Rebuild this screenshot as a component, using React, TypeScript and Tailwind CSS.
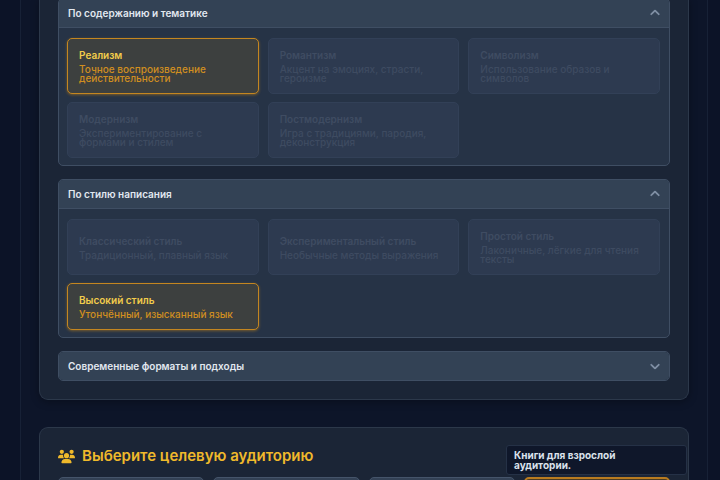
import { useState } from "react";
import { FaChevronDown, FaChevronUp, FaUsers } from "react-icons/fa6";

type Option = { title: string; text: string; state: "selected" | "disabled" };
type Group = { title: string; open: boolean; options: Option[] };

const groups: Group[] = [
  {
    title: "По содержанию и тематике",
    open: true,
    options: [
      { title: "Реализм", text: "Точное воспроизведение действительности", state: "selected" },
      { title: "Романтизм", text: "Акцент на эмоциях, страсти, героизме", state: "disabled" },
      { title: "Символизм", text: "Использование образов и символов", state: "disabled" },
      { title: "Модернизм", text: "Экспериментирование с формами и стилем", state: "disabled" },
      { title: "Постмодернизм", text: "Игра с традициями, пародия, деконструкция", state: "disabled" },
    ],
  },
  {
    title: "По стилю написания",
    open: true,
    options: [
      { title: "Классический стиль", text: "Традиционный, плавный язык", state: "disabled" },
      { title: "Экспериментальный стиль", text: "Необычные методы выражения", state: "disabled" },
      { title: "Простой стиль", text: "Лаконичные, лёгкие для чтения тексты", state: "disabled" },
      { title: "Высокий стиль", text: "Утончённый, изысканный язык", state: "selected" },
    ],
  },
  { title: "Современные форматы и подходы", open: false, options: [] },
];

const audiences = ["Дети", "Подростки", "Молодёжь", "Взрослые"];

function OptionCard({ option }: { option: Option }) {
  const selected = option.state === "selected";
  return (
    <button
      type="button"
      disabled={!selected}
      aria-pressed={selected}
      className={`flex flex-col justify-center rounded-[5px] border px-[11px] py-[10px] text-left ${
        selected
          ? "border-[#c48620] bg-[#3d403f] shadow-[0_1px_3px_rgba(245,158,11,0.4)]"
          : "border-[#324057] bg-[#2d3a50]"
      }`}
    >
      <span className={`text-[10px] leading-3 font-semibold ${selected ? "text-[#f2cc4b]" : "text-[#3f4c62]"}`}>
        {option.title}
      </span>
      <span
        className={`mt-1 text-[10px] leading-[9px] font-medium ${selected ? "text-[#d08e1f]" : "text-[#3e4b61]"}`}
      >
        {option.text}
      </span>
    </button>
  );
}

function Accordion({ group }: { group: Group }) {
  const [open, setOpen] = useState(group.open);
  const Chevron = open ? FaChevronUp : FaChevronDown;
  return (
    <div className="overflow-hidden rounded-[5px] border border-[#3f4e63] bg-[#263346]">
      <button
        type="button"
        aria-expanded={open}
        onClick={() => setOpen(!open)}
        className="flex h-7 w-full items-center justify-between bg-[#334255] px-[9px] text-[10px] font-semibold text-[#e2e8f0]"
      >
        {group.title}
        <Chevron className="size-[10px] stroke-current stroke-[24] text-[#8796ab]" />
      </button>
      {open && (
        <div className="grid grid-cols-3 gap-x-[9px] gap-y-2 border-t border-[#3f4e63] pt-[10px] pr-[9px] pb-[7px] pl-2">
          {group.options.map((option) => (
            <OptionCard key={option.title} option={option} />
          ))}
        </div>
      )}
    </div>
  );
}

export default function App() {
  return (
    <div className="h-screen overflow-hidden bg-[#0c1327] pr-3 pl-5 font-['Inter','Noto_Sans',sans-serif]">
      <main className="flex min-h-full flex-col gap-[27px] border-x border-[#172136] bg-[#0d1529] px-[18px]">
        <section className="-mt-0.5 flex flex-col gap-[13px] rounded-b-[9px] border border-t-0 border-[#2c384a] bg-[#1b2536] px-[18px] pb-[18px] shadow-[0_2px_8px_rgba(0,0,0,0.3)]">
          {groups.map((group) => (
            <Accordion key={group.title} group={group} />
          ))}
        </section>

        <section className="rounded-t-[9px] border border-b-0 border-[#2c384a] bg-[#1b2536] px-[18px] pt-[18px]">
          <h2 className="flex items-center gap-[7px] text-[15px] leading-5 font-semibold text-[#f0b92b]">
            <FaUsers className="size-[17px]" />
            Выберите целевую аудиторию
          </h2>
          <div className="mt-[11px] grid grid-cols-4 gap-[9px]">
            {audiences.map((name) => {
              const selected = name === "Взрослые";
              return (
                <div key={name} className="relative">
                  <button
                    type="button"
                    aria-label={name}
                    aria-pressed={selected}
                    className={`block h-11 w-full rounded-[5px] ${
                      selected
                        ? "border-2 border-[#b87b20] bg-[#4a3b22]"
                        : "border border-[#45546a] bg-[#334155]"
                    }`}
                  />
                  {selected && (
                    <div
                      role="tooltip"
                      className="absolute -right-[17px] bottom-full mb-0.5 w-[181px] rounded-[3px] border border-[#253146] bg-[#0f172a] px-[7px] py-1 text-[10px] leading-[10px] font-bold text-[#dbe2ec]"
                    >
                      <p className="w-32">Книги для взрослой аудитории.</p>
                    </div>
                  )}
                </div>
              );
            })}
          </div>
        </section>
      </main>
    </div>
  );
}
